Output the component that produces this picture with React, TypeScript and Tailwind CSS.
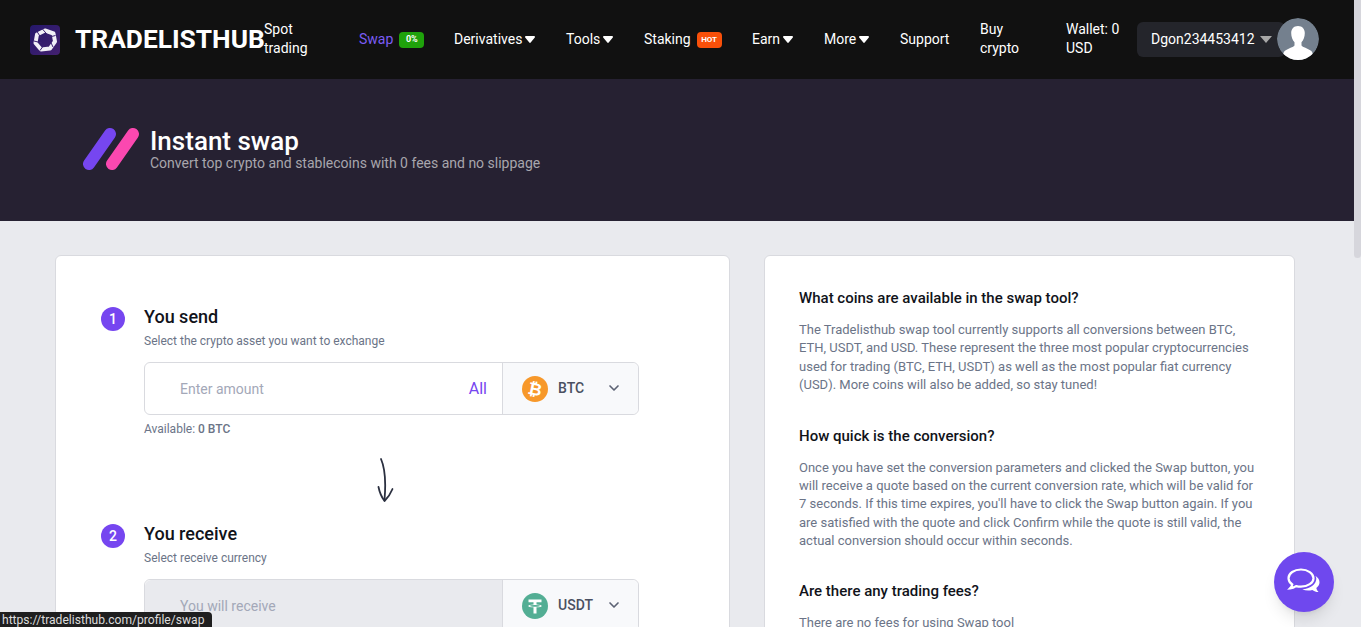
import React from 'react';
import { ChevronDown } from 'lucide-react';

const Caret = ({ className = 'fill-white' }: { className?: string }) => (
  <svg width="10" height="7" viewBox="0 0 10 7" className={`ml-[3px] ${className}`}>
    <path d="M1 0h8c.9 0 1.300.9.800 1.500L5.700 6.600c-.4.4-1 .4-1.400 0L.2 1.500C-.3.900.1 0 1 0z" />
  </svg>
);

const Logo = () => (
  <svg width="30" height="30" viewBox="0 0 30 30">
    <defs>
      <linearGradient id="logoBg" x1="0" y1="0" x2="1" y2="1">
        <stop offset="0" stopColor="#25186b" />
        <stop offset="1" stopColor="#43206f" />
      </linearGradient>
    </defs>
    <rect width="30" height="30" rx="4" fill="url(#logoBg)" />
    <path d="M15 5.500 23.500 8.500 25 16.500 20 23.500 11 24.500 5.500 18 7 9.500z" fill="none" stroke="#f1eff7" strokeWidth="4" strokeLinejoin="round" />
    <g stroke="#3a2072" strokeWidth="1" fill="none">
      <path d="M12 3.500 18.500 11M25.500 10.500 17.500 12.500M23 22 19.500 14.500M10 25.500 15 18.500M4 16 12 18M7 6.500 11.500 13.500" />
    </g>
  </svg>
);

const Stripes = () => (
  <svg width="58" height="44" viewBox="0 0 58 44">
    <line x1="6" y1="37" x2="27" y2="7" stroke="#7646f0" strokeWidth="12" strokeLinecap="round" />
    <line x1="29" y1="37" x2="50" y2="7" stroke="#fb48b0" strokeWidth="12" strokeLinecap="round" />
  </svg>
);

const BtcIcon = () => (
  <svg width="26" height="26" viewBox="0 0 26 26">
    <circle cx="13" cy="13" r="13" fill="#f7982a" />
    <text x="13" y="19" textAnchor="middle" fontSize="17" fontWeight="700" fill="#fff" transform="rotate(12 13 13)" fontFamily="Roboto, sans-serif">₿</text>
  </svg>
);

const UsdtIcon = () => (
  <svg width="26" height="26" viewBox="0 0 26 26">
    <circle cx="13" cy="13" r="13" fill="#53ae94" />
    <path d="M6.500 6.500h13v2.700h-5v2.300c3 .2 5.300.7 5.300 1.400s-2.300 1.200-5.300 1.400v6.200h-3v-6.200c-3-.2-5.300-.7-5.300-1.400s2.300-1.200 5.300-1.400V9.200h-5z" fill="#fff" />
    <ellipse cx="13" cy="12.900" rx="5" ry=".8" fill="#53ae94" />
  </svg>
);

const Chat = () => (
  <svg width="36" height="30" viewBox="0 0 36 30">
    <path d="M29 8.500c2.800 1.700 4.500 4 4.500 6.800 0 2.300-1.300 4.300-3.200 5.800.3 1.500 1.100 2.900 2.200 4-2.300-.2-4.500-1-6.200-2.200-1.300.4-2.700.6-4.200.6-2.100 0-4.100-.4-5.800-1.200 7.500-.3 14-4.700 14-10.500 0-1-.3-2-.8-2.800z" fill="#fff" />
    <path d="M15 2.500C8.200 2.500 2.500 6.300 2.500 11.200c0 2.500 1.500 4.700 3.800 6.300-.4 1.400-1.200 2.700-2.300 3.800 2.300-.2 4.400-1 6.100-2.200 1.500.4 3.100.6 4.900.6 6.800 0 12.500-3.800 12.500-8.500S21.800 2.500 15 2.500z" fill="none" stroke="#fff" strokeWidth="2.200" />
  </svg>
);

const Avatar = () => (
  <svg width="42" height="42" viewBox="0 0 42 42" className="rounded-full">
    <circle cx="21" cy="21" r="21" fill="#74808e" />
    <path d="M21 8c4.200 0 6.800 2.800 6.800 7 0 3.800-1.300 7.200-3.300 9.200v3.300c.8 1.500 6.500 3 9.500 5.300 1.500 1.200 2 3 2 9.200H6c0-6.200.5-8 2-9.200 3-2.300 8.700-3.800 9.500-5.300v-3.300c-2-2-3.300-5.400-3.300-9.200 0-4.200 2.600-7 6.800-7z" fill="#fff" />
  </svg>
);

const Step = ({ n, title, sub }: { n: number; title: string; sub: string }) => (
  <div className="flex">
    <div className="w-6 h-6 mt-[2px] rounded-full bg-[#7646f0] text-white text-sm font-medium flex items-center justify-center shrink-0">{n}</div>
    <div className="ml-[19px]">
      <h3 className="text-lg leading-[24px] font-medium text-[#11131a]">{title}</h3>
      <p className="text-xs leading-[14px] mt-[5px] text-[#6b7487]">{sub}</p>
    </div>
  </div>
);

const Faq = ({ q, a, mt }: { q: string; a: string; mt: string }) => (
  <div className={mt}>
    <h4 className="text-[15px] leading-[20px] font-medium text-[#11131a]">{q}</h4>
    <p className="text-[13px] leading-[18.400px] mt-[13px] text-[#6b7487]">{a}</p>
  </div>
);

export default function App() {
  return (
    <div className="relative h-[627px] overflow-hidden flex bg-[#e9eaee] font-['Roboto',sans-serif]">
      <div className="flex-1 min-w-0">
        <header className="h-[79px] bg-[#111111] flex items-center pl-[30px] text-sm text-white leading-[19px]">
          <Logo />
          <span className="ml-[15px] w-[189px] text-[26.300px] font-bold whitespace-nowrap">TRADELISTHUB</span>
          <a className="w-[95px] pr-[40px] -mt-[2px]">Spot trading</a>
          <a className="w-[95px] flex items-center text-[#7b5cf5]">
            Swap
            <span className="ml-[6px] w-[25px] h-4 rounded-sm bg-[#1fa20b] text-white text-[9px] font-bold flex items-center justify-center">0%</span>
          </a>
          <a className="w-[112px] flex items-center">Derivatives<Caret /></a>
          <a className="w-[78px] flex items-center">Tools<Caret /></a>
          <a className="w-[108px] flex items-center">
            Staking
            <span className="ml-[6px] w-[25px] h-4 rounded-sm bg-[#f9500a] text-white text-[8px] font-bold flex items-center justify-center">HOT</span>
          </a>
          <a className="w-[72px] flex items-center">Earn<Caret /></a>
          <a className="w-[76px] flex items-center">More<Caret /></a>
          <a className="w-[80px]">Support</a>
          <a className="w-[86px] pr-[30px] -mt-[2px]">Buy crypto</a>
          <a className="w-[71px] -mt-[2px]">Wallet: 0 USD</a>
          <div className="h-[35px] w-[148px] rounded-md bg-[#24252b] flex items-center pl-[14px] whitespace-nowrap">
            Dgon234453412
            <svg width="12" height="7" viewBox="0 0 12 7" className="ml-[5px] fill-[#a8a8a8]"><path d="M0 0h12L6 7z" /></svg>
          </div>
          <div className="-ml-[8px] -mt-[2px] relative"><Avatar /></div>
        </header>

        <section className="h-[142px] bg-[#262132] flex items-center pl-[83px] pb-[2px]">
          <div className="-mt-[1px]"><Stripes /></div>
          <div className="ml-[9px] -mt-[2px]">
            <h1 className="text-[26px] leading-[30px] font-medium text-white">Instant swap</h1>
            <p className="text-sm leading-[16px] -mt-[1px] text-[#a8a6ad]">Convert top crypto and stablecoins with 0 fees and no slippage</p>
          </div>
        </section>

        <main className="flex items-start gap-[34px] pl-[55px] pt-[34px]">
          <section className="w-[675px] h-[500px] bg-white border border-[#d9dadf] rounded-md pl-[45px] pt-[49px]">
            <Step n={1} title="You send" sub="Select the crypto asset you want to exchange" />
            <div className="ml-[43px] mt-[14px] w-[495px] h-[53px] rounded-md border border-[#d9dadf] flex">
              <div className="flex-1 flex items-center justify-between pl-[35px] pr-[15px]">
                <span className="text-sm text-[#a3a8b8]">Enter amount</span>
                <span className="text-base text-[#7646f0]">All</span>
              </div>
              <div className="w-[136px] border-l border-[#d9dadf] bg-[#f8f9fb] rounded-r-md flex items-center pl-[19px]">
                <BtcIcon />
                <span className="ml-[10px] -mt-[2px] text-sm font-medium text-[#4a5061]">BTC</span>
                <ChevronDown size={16} strokeWidth={2.500} className="ml-[22px] -mt-[2px] text-[#5c6274]" />
              </div>
            </div>
            <p className="ml-[43px] mt-[7px] text-xs leading-[14px] text-[#6b7487]">Available: <b className="font-medium">0 BTC</b></p>
            <div className="ml-[275px] mt-[22px] h-[48px]">
              <svg width="20" height="46" viewBox="0 0 20 46" fill="none" stroke="#2b3040" strokeWidth="1.800" strokeLinecap="round" strokeLinejoin="round">
                <path d="M5 1c3.500 8 5.500 18 3.500 41" />
                <path d="M2.500 29c1 5 3 10 6 14 3-3 6-7 8-12" />
              </svg>
            </div>
            <div className="mt-[16px]">
              <Step n={2} title="You receive" sub="Select receive currency" />
            </div>
            <div className="ml-[43px] mt-[14px] w-[495px] h-[53px] rounded-md border border-[#d9dadf] flex">
              <div className="flex-1 bg-[#e9eaee] rounded-l-md flex items-center pl-[35px]">
                <span className="text-sm text-[#a3a8b8]">You will receive</span>
              </div>
              <div className="w-[136px] border-l border-[#d9dadf] bg-[#f8f9fb] rounded-r-md flex items-center pl-[19px]">
                <UsdtIcon />
                <span className="ml-[10px] -mt-[2px] text-sm font-medium text-[#4a5061]">USDT</span>
                <ChevronDown size={16} strokeWidth={2.500} className="ml-[13px] -mt-[2px] text-[#5c6274]" />
              </div>
            </div>
          </section>

          <aside className="w-[531px] h-[500px] bg-white border border-[#d9dadf] rounded-md pl-[34px] pr-[34px] pt-[32px]">
            <Faq
              mt=""
              q="What coins are available in the swap tool?"
              a="The Tradelisthub swap tool currently supports all conversions between BTC, ETH, USDT, and USD. These represent the three most popular cryptocurrencies used for trading (BTC, ETH, USDT) as well as the most popular fiat currency (USD). More coins will also be added, so stay tuned!"
            />
            <Faq
              mt="mt-[31px]"
              q="How quick is the conversion?"
              a="Once you have set the conversion parameters and clicked the Swap button, you will receive a quote based on the current conversion rate, which will be valid for 7 seconds. If this time expires, you'll have to click the Swap button again. If you are satisfied with the quote and click Confirm while the quote is still valid, the actual conversion should occur within seconds."
            />
            <Faq
              mt="mt-[30px]"
              q="Are there any trading fees?"
              a="There are no fees for using Swap tool"
            />
          </aside>
        </main>
      </div>

      <div className="w-[7px] shrink-0">
        <div className="h-[258px] rounded-b-sm bg-[#d6d6dc]" />
      </div>

      <button className="absolute left-[1274px] top-[552px] w-[60px] h-[60px] rounded-full bg-[#6f48ee] shadow-lg flex items-center justify-center">
        <Chat />
      </button>

      <div className="absolute left-0 bottom-0 h-[15px] w-[212px] rounded-tr-sm bg-[#1f1f1f] pl-[2px] text-[12.100px] leading-[17px] text-[#dddddd] whitespace-nowrap overflow-hidden">
        https://tradelisthub.com/profile/swap
      </div>
    </div>
  );
}
